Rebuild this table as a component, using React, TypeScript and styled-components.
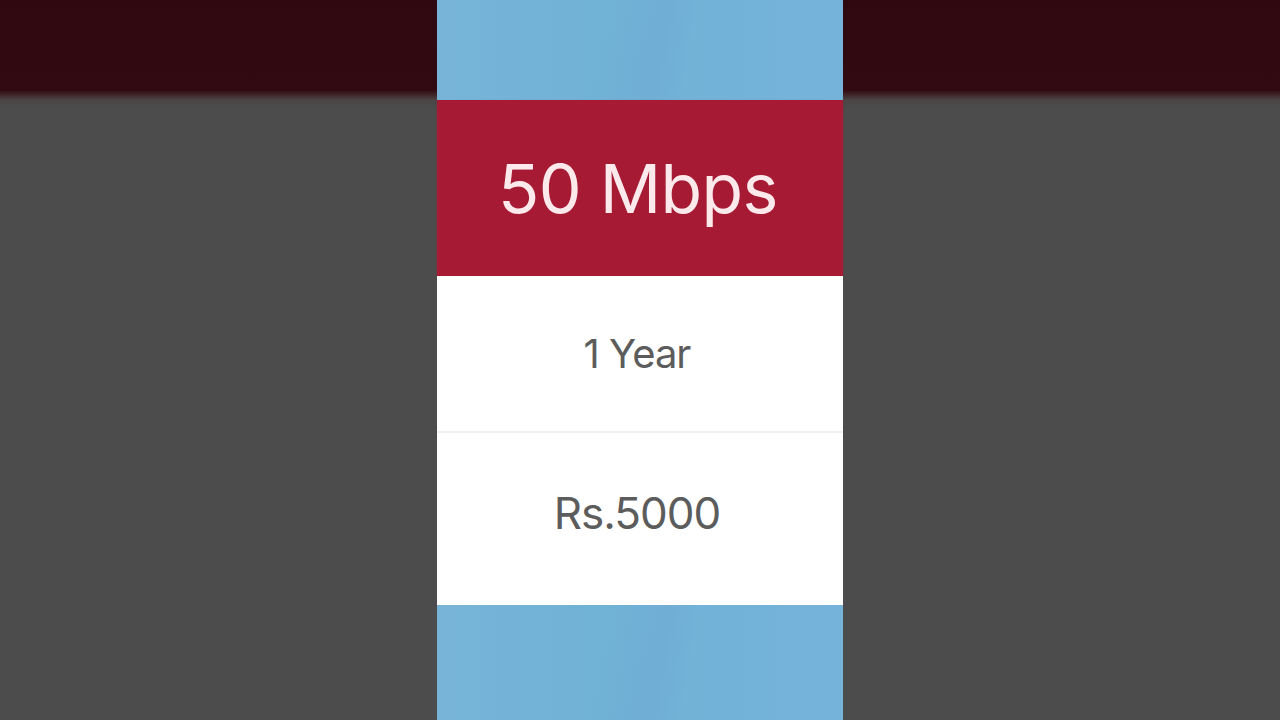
import React from "react";
import styled, { createGlobalStyle } from "styled-components";

const Global = createGlobalStyle`
  html, body { margin: 0; padding: 0; }
  body { font-family: Inter, "Liberation Sans", sans-serif; }
`;

const Page = styled.div`
  width: 1280px;
  height: 720px;
  display: flex;
  justify-content: center;
  overflow: hidden;
  background: linear-gradient(
    to bottom,
    #300810 0px,
    #320a12 90px,
    #4b4445 100px,
    #4c4c4c 108px,
    #4c4c4c 100%
  );
`;

const Column = styled.div`
  width: 406px;
  height: 720px;
  display: flex;
  flex-direction: column;
`;

const BlueBand = styled.div<{ $h: number }>`
  height: ${(p) => p.$h}px;
  flex: ${(p) => (p.$h ? "none" : "1")};
  background:
    linear-gradient(100deg, rgba(255,255,255,0) 40%, rgba(110,160,205,0.25) 55%, rgba(255,255,255,0) 62%),
    linear-gradient(to right, #77b4d8, #70b2d6 40%, #76b3da 100%);
`;

const Header = styled.div`
  height: 176px;
  background: #a61a34;
  display: flex;
  align-items: center;
  justify-content: center;
  color: #fbe9ec;
  font-size: 68px;
  font-weight: 400;
  letter-spacing: -0.6px;
  padding-right: 4px;
  box-sizing: border-box;
  box-shadow: 0 1px 2px rgba(166, 26, 52, 0.4);
`;

const Cell = styled.div<{ $h: number; $size: number; $divider?: boolean; $lift?: number }>`
  height: ${(p) => p.$h}px;
  background: #ffffff;
  display: flex;
  align-items: center;
  justify-content: center;
  color: #5c5c5c;
  font-size: ${(p) => p.$size}px;
  font-weight: 400;
  letter-spacing: -1px;
  padding-right: 6px;
  padding-bottom: ${(p) => p.$lift ?? 0}px;
  border-bottom: ${(p) => (p.$divider ? "2px solid #efefef" : "none")};
  box-sizing: border-box;
`;

export default function App() {
  return (
    <>
      <Global />
      <Page>
        <Column>
          <BlueBand $h={100} />
          <Header>50 Mbps</Header>
          <Cell $h={157} $size={40} $divider>1 Year</Cell>
          <Cell $h={172} $size={44} $lift={12}>Rs.5000</Cell>
          <BlueBand $h={0} />
        </Column>
      </Page>
    </>
  );
}
